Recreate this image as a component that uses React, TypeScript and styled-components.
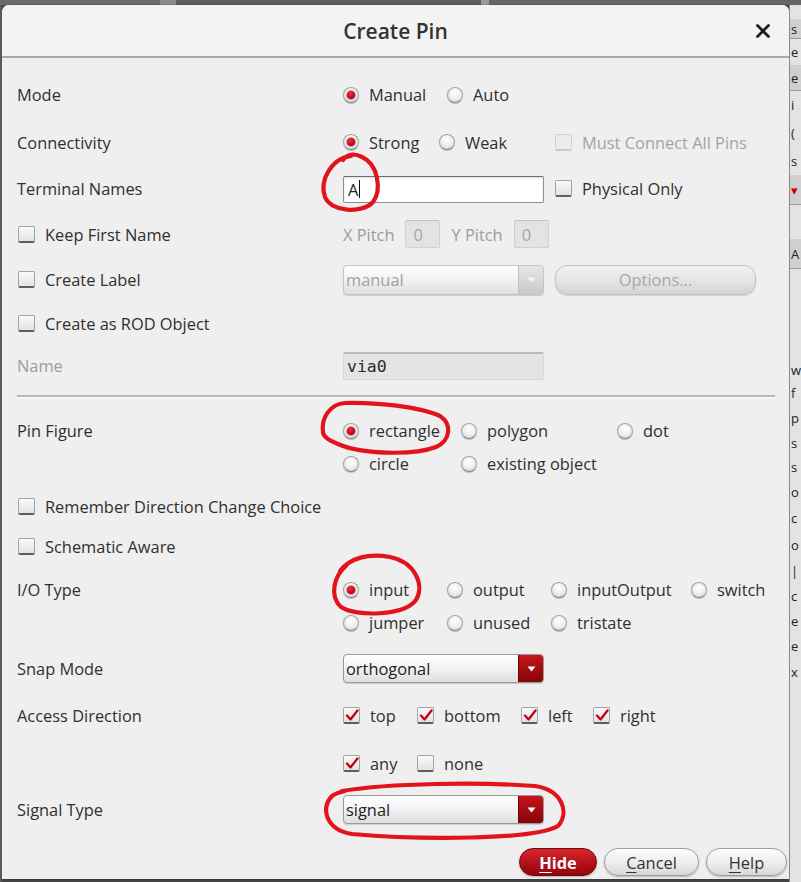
import React from "react";
import styled, { createGlobalStyle, css } from "styled-components";

const GlobalStyle = createGlobalStyle`
  html, body { margin: 0; padding: 0; background: #3f3f3f; }
  body { font-family: "Open Sans", "Noto Sans", sans-serif; overflow: hidden; }
  * { box-sizing: border-box; }
`;

const FS = "16.4px";

const Page = styled.div`
  position: relative;
  width: 801px;
  height: 882px;
  overflow: hidden;
  display: flex;
  flex-direction: column;
  background: #444;
`;

const TopStrip = styled.div`
  height: 5px;
  background: linear-gradient(90deg, #6b6b6b 0 20%, #8a8a8a 20% 22%, #5e5e5e 22% 60%, #9a9a9a 60% 61%, #666 61%);
`;

const Main = styled.div`
  flex: 1;
  display: flex;
  min-height: 0;
`;

const LeftEdge = styled.div`
  width: 2px;
  background: #5a5a5a;
`;

const Dialog = styled.div`
  width: 787px;
  height: 874px;
  background: #efefef;
  border-radius: 7px 7px 0 0;
  display: flex;
  flex-direction: column;
  box-shadow: 1px 0 0 #777, 2px 0 2px rgba(0, 0, 0, 0.4);
`;

const Header = styled.div`
  height: 53px;
  display: grid;
  grid-template-columns: 1fr auto 1fr;
  align-items: center;
  background: #f3f3f3;
  border-radius: 7px 7px 0 0;
  border-bottom: 2px solid #a9a9a9;
`;

const Title = styled.div`
  grid-column: 2;
  font-size: 21px;
  font-weight: 600;
  color: #333;
  padding-top: 1px;
`;

const CloseButton = styled.div`
  justify-self: end;
  margin-right: 19px;
  display: flex;
  align-items: center;
`;

const Body = styled.div`
  padding: 12px 14px 0 15px;
  display: flex;
  flex-direction: column;
`;

const Row = styled.div<{ $h: number }>`
  display: grid;
  grid-template-columns: 326px 1fr;
  align-items: center;
  height: ${(p) => p.$h}px;
  padding-top: 1px;
`;

const MultiRow = styled.div`
  display: grid;
  grid-template-columns: 326px 1fr;
  align-items: start;
  padding: 8px 0 6px;
`;

const Label = styled.div<{ $muted?: boolean; $lh?: number }>`
  font-size: ${FS};
  color: ${(p) => (p.$muted ? "#9d9d9d" : "#2f2f2f")};
  line-height: ${(p) => (p.$lh ? `${p.$lh}px` : "normal")};
  white-space: nowrap;
`;

const CheckRow = styled.label`
  display: flex;
  align-items: center;
  gap: 10px;
  margin-left: 1px;
  font-size: ${FS};
  color: #2f2f2f;
  white-space: nowrap;
`;

const ControlGrid = styled.div`
  display: grid;
  grid-template-columns: 201px auto;
  column-gap: 11px;
  align-items: center;
`;

const OptionGrid = styled.div<{ $cols: string; $rowH?: number }>`
  display: grid;
  grid-template-columns: ${(p) => p.$cols};
  grid-auto-rows: ${(p) => (p.$rowH ? `${p.$rowH}px` : "auto")};
  align-items: center;
`;

const Inline = styled.div<{ $gap: number }>`
  display: flex;
  align-items: center;
  gap: ${(p) => p.$gap}px;
`;

const Option = styled.span<{ $muted?: boolean }>`
  display: inline-flex;
  align-items: center;
  gap: 10px;
  font-size: ${FS};
  color: ${(p) => (p.$muted ? "#a3a3a3" : "#2f2f2f")};
  white-space: nowrap;
`;

const RadioCircle = styled.span<{ $on?: boolean }>`
  width: 16px;
  height: 16px;
  border-radius: 50%;
  flex: none;
  border: 1px solid #a2a2a2;
  border-bottom-color: #7e7e7e;
  background: radial-gradient(circle at 50% 35%, #ffffff 0%, #f1f1f1 45%, #cdcdcd 100%);
  box-shadow: 0 1px 1px rgba(0, 0, 0, 0.2);
  display: flex;
  align-items: center;
  justify-content: center;
  ${(p) =>
    p.$on &&
    css`
      &::after {
        content: "";
        width: 8px;
        height: 8px;
        border-radius: 50%;
        background: radial-gradient(circle at 40% 35%, #f0303a 0%, #c3001b 60%, #8a0010 100%);
        box-shadow: 0 0 0 1px rgba(120, 0, 0, 0.35);
      }
    `}
`;

const CheckBox = styled.span<{ $disabled?: boolean }>`
  width: 17px;
  height: 17px;
  flex: none;
  border: 1px solid ${(p) => (p.$disabled ? "#d0d0d0" : "#a3a3a3")};
  border-bottom: 2px solid ${(p) => (p.$disabled ? "#c8c8c8" : "#5f5f5f")};
  border-radius: 2px;
  background: ${(p) =>
    p.$disabled ? "#ececec" : "linear-gradient(#fafafa, #e2e2e2)"};
  display: flex;
  align-items: center;
  justify-content: center;
`;

const TextField = styled.div`
  width: 201px;
  height: 27px;
  margin-top: 1px;
  background: #fff;
  border: 1px solid #8f8f8f;
  border-top-color: #6e6e6e;
  border-radius: 2px;
  box-shadow: inset 0 1px 2px rgba(0, 0, 0, 0.15);
  display: flex;
  align-items: center;
  padding-left: 4px;
  font-size: ${FS};
  color: #222;
`;

const Caret = styled.span`
  width: 1px;
  height: 18px;
  background: #111;
  margin-left: 1px;
`;

const SmallField = styled.div`
  width: 35px;
  height: 28px;
  background: #e3e3e3;
  border: 1px solid #d0d0d0;
  border-top-color: #c2c2c2;
  border-radius: 2px;
  display: flex;
  align-items: center;
  padding-left: 7px;
  font-size: ${FS};
  color: #a6a6a6;
`;

const NameField = styled.div`
  width: 201px;
  height: 28px;
  background: #e4e4e4;
  border: 1px solid #d6d6d6;
  border-top: 2px solid #b9b9b9;
  border-radius: 2px;
  display: flex;
  align-items: center;
  padding-left: 3px;
  font-family: "DejaVu Sans Mono", "Liberation Mono", monospace;
  font-size: 16.5px;
  color: #2a2a2a;
`;

const Select = styled.div<{ $disabled?: boolean; $h: number }>`
  width: 201px;
  height: ${(p) => p.$h}px;
  display: flex;
  align-items: stretch;
  border: 1px solid ${(p) => (p.$disabled ? "#c4c4c4" : "#9a9a9a")};
  border-radius: 4px;
  background: linear-gradient(#ffffff, #f0f0f0 55%, #dedede);
  box-shadow: 0 1px 1px rgba(0, 0, 0, 0.15);
  overflow: hidden;
`;

const SelectText = styled.span<{ $disabled?: boolean }>`
  flex: 1;
  display: flex;
  align-items: center;
  padding-left: 2px;
  font-size: ${FS};
  color: ${(p) => (p.$disabled ? "#a2a2a2" : "#222")};
`;

const SelectArrow = styled.span<{ $disabled?: boolean }>`
  width: 25px;
  display: flex;
  align-items: center;
  justify-content: center;
  background: ${(p) =>
    p.$disabled
      ? "linear-gradient(#e6e6e6, #c9c9c9)"
      : "linear-gradient(#c8161d, #9e0a0f 60%, #8a0509)"};
  border-left: 1px solid ${(p) => (p.$disabled ? "#c0c0c0" : "#6e0407")};
`;

const OptionsButton = styled.div`
  width: 201px;
  height: 30px;
  border-radius: 12px;
  border: 1px solid #c2c2c2;
  background: linear-gradient(#f2f2f2, #e2e2e2 60%, #d3d3d3);
  box-shadow: 0 1px 1px rgba(0, 0, 0, 0.12);
  display: flex;
  align-items: center;
  justify-content: center;
  font-size: ${FS};
  color: #a8a8a8;
`;

const Separator = styled.div`
  height: 20px;
  display: flex;
  align-items: center;
  &::before {
    content: "";
    flex: 1;
    height: 2px;
    background: #b9b9b9;
    box-shadow: 0 1px 0 #fafafa;
  }
`;

const Footer = styled.div`
  display: flex;
  justify-content: flex-end;
  gap: 7px;
  padding: 17px 2px 0 0;
`;

const DialogButton = styled.div<{ $primary?: boolean; $w: number }>`
  width: ${(p) => p.$w}px;
  height: 28px;
  border-radius: 14px;
  display: flex;
  align-items: center;
  justify-content: center;
  font-size: ${FS};
  ${(p) =>
    p.$primary
      ? css`
          background: linear-gradient(#d9262d, #b2101a 55%, #94060c);
          border: 1px solid #6e0508;
          color: #fff;
          font-weight: 700;
        `
      : css`
          background: linear-gradient(#fdfdfd, #ececec 55%, #d6d6d6);
          border: 1px solid #9d9d9d;
          color: #333;
        `}
  box-shadow: 0 1px 2px rgba(0, 0, 0, 0.25);
  u {
    text-decoration-thickness: 1px;
    text-underline-offset: 3px;
  }
`;

const RightStrip = styled.div`
  flex: 1;
  background: #e3e3e3;
  border-left: 1px solid #8a8a8a;
  display: flex;
  flex-direction: column;
  overflow: hidden;
`;

const StripItem = styled.div<{ $h: number; $red?: boolean; $dark?: boolean }>`
  height: ${(p) => p.$h}px;
  font-size: 13px;
  line-height: ${(p) => p.$h}px;
  color: ${(p) => (p.$red ? "#c00" : "#222")};
  background: ${(p) => (p.$dark ? "#cfcfcf" : "transparent")};
  white-space: nowrap;
  padding-left: 1px;
  border-bottom: ${(p) => (p.$dark ? "1px solid #999" : "none")};
`;

const Annotations = styled.svg`
  position: absolute;
  left: 0;
  top: 0;
  pointer-events: none;
`;

const CheckMark = () => (
  <svg width="14" height="13" viewBox="0 0 14 13">
    <path d="M2 6.5 L5.5 10.5 L12.5 1.5" fill="none" stroke="#c4001c" strokeWidth="2.3" strokeLinecap="round" strokeLinejoin="round" />
  </svg>
);

const DownTriangle = ({ color }: { color: string }) => (
  <svg width="9" height="6" viewBox="0 0 9 6">
    <path d="M0.5 0.5 L8.5 0.5 L4.5 5.5 Z" fill={color} />
  </svg>
);

const Radio = ({ on, children }: { on?: boolean; children: React.ReactNode }) => (
  <Option>
    <RadioCircle $on={on} />
    {children}
  </Option>
);

const Check = ({ on, disabled, children }: { on?: boolean; disabled?: boolean; children: React.ReactNode }) => (
  <Option $muted={disabled}>
    <CheckBox $disabled={disabled}>{on && <CheckMark />}</CheckBox>
    {children}
  </Option>
);

const stripItems: { h: number; t: string; red?: boolean; dark?: boolean }[] = [
  { h: 14, t: "" },
  { h: 20, t: "s", dark: true },
  { h: 26, t: "e" },
  { h: 26, t: "e", dark: true },
  { h: 28, t: "i" },
  { h: 28, t: "(" },
  { h: 28, t: "s" },
  { h: 30, t: "▾", red: true, dark: true },
  { h: 34, t: "" },
  { h: 30, t: "A", dark: true },
  { h: 90, t: "" },
  { h: 22, t: "w" },
  { h: 24, t: "f" },
  { h: 26, t: "p" },
  { h: 24, t: "s" },
  { h: 24, t: "s" },
  { h: 26, t: "o" },
  { h: 26, t: "c" },
  { h: 28, t: "o" },
  { h: 24, t: "|" },
  { h: 26, t: "c" },
  { h: 25, t: "e" },
  { h: 25, t: "e" },
  { h: 26, t: "x" },
];

export default function App() {
  return (
    <>
      <GlobalStyle />
      <Page>
        <TopStrip />
        <Main>
          <LeftEdge />
          <Dialog>
            <Header>
              <Title>Create Pin</Title>
              <CloseButton>
                <svg width="14" height="14" viewBox="0 0 14 14">
                  <path d="M1.5 1.5 L12.5 12.5 M12.5 1.5 L1.5 12.5" stroke="#1e1e1e" strokeWidth="2.8" strokeLinecap="round" />
                </svg>
              </CloseButton>
            </Header>
            <Body>
              <Row $h={48}>
                <Label>Mode</Label>
                <OptionGrid $cols="104px auto">
                  <Radio on>Manual</Radio>
                  <Radio>Auto</Radio>
                </OptionGrid>
              </Row>
              <Row $h={47}>
                <Label>Connectivity</Label>
                <ControlGrid>
                  <OptionGrid $cols="96px auto">
                    <Radio on>Strong</Radio>
                    <Radio>Weak</Radio>
                  </OptionGrid>
                  <Check disabled>Must Connect All Pins</Check>
                </ControlGrid>
              </Row>
              <Row $h={46}>
                <Label>Terminal Names</Label>
                <ControlGrid>
                  <TextField>
                    A<Caret />
                  </TextField>
                  <Check>Physical Only</Check>
                </ControlGrid>
              </Row>
              <Row $h={45}>
                <CheckRow>
                  <CheckBox />
                  Keep First Name
                </CheckRow>
                <Inline $gap={11}>
                  <Label $muted>X Pitch</Label>
                  <SmallField>0</SmallField>
                  <Label $muted>Y Pitch</Label>
                  <SmallField>0</SmallField>
                </Inline>
              </Row>
              <Row $h={46}>
                <CheckRow>
                  <CheckBox />
                  Create Label
                </CheckRow>
                <ControlGrid>
                  <Select $disabled $h={30}>
                    <SelectText $disabled>manual</SelectText>
                    <SelectArrow $disabled>
                      <DownTriangle color="#f4f4f4" />
                    </SelectArrow>
                  </Select>
                  <OptionsButton>Options...</OptionsButton>
                </ControlGrid>
              </Row>
              <Row $h={42}>
                <CheckRow>
                  <CheckBox />
                  Create as ROD Object
                </CheckRow>
                <div />
              </Row>
              <Row $h={42}>
                <Label $muted>Name</Label>
                <NameField>via0</NameField>
              </Row>
              <Separator />
              <MultiRow>
                <Label $lh={33}>Pin Figure</Label>
                <OptionGrid $cols="118px 156px auto" $rowH={33}>
                  <Radio on>rectangle</Radio>
                  <Radio>polygon</Radio>
                  <Radio>dot</Radio>
                  <Radio>circle</Radio>
                  <Radio>existing object</Radio>
                </OptionGrid>
              </MultiRow>
              <Row $h={40}>
                <CheckRow>
                  <CheckBox />
                  Remember Direction Change Choice
                </CheckRow>
                <div />
              </Row>
              <Row $h={39}>
                <CheckRow>
                  <CheckBox />
                  Schematic Aware
                </CheckRow>
                <div />
              </Row>
              <MultiRow>
                <Label $lh={33}>I/O Type</Label>
                <OptionGrid $cols="104px 104px 140px auto" $rowH={33}>
                  <Radio on>input</Radio>
                  <Radio>output</Radio>
                  <Radio>inputOutput</Radio>
                  <Radio>switch</Radio>
                  <Radio>jumper</Radio>
                  <Radio>unused</Radio>
                  <Radio>tristate</Radio>
                </OptionGrid>
              </MultiRow>
              <Row $h={46}>
                <Label>Snap Mode</Label>
                <Select $h={29}>
                  <SelectText>orthogonal</SelectText>
                  <SelectArrow>
                    <DownTriangle color="#ffffff" />
                  </SelectArrow>
                </Select>
              </Row>
              <Row $h={48}>
                <Label>Access Direction</Label>
                <OptionGrid $cols="74px 104px 72px auto">
                  <Check on>top</Check>
                  <Check on>bottom</Check>
                  <Check on>left</Check>
                  <Check on>right</Check>
                </OptionGrid>
              </Row>
              <Row $h={48}>
                <div />
                <OptionGrid $cols="74px auto">
                  <Check on>any</Check>
                  <Check>none</Check>
                </OptionGrid>
              </Row>
              <Row $h={44}>
                <Label>Signal Type</Label>
                <Select $h={29}>
                  <SelectText>signal</SelectText>
                  <SelectArrow>
                    <DownTriangle color="#ffffff" />
                  </SelectArrow>
                </Select>
              </Row>
            </Body>
            <Footer>
              <DialogButton $primary $w={78}>
                <span>
                  <u>H</u>ide
                </span>
              </DialogButton>
              <DialogButton $w={95}>
                <span>
                  <u>C</u>ancel
                </span>
              </DialogButton>
              <DialogButton $w={81}>
                <span>
                  <u>H</u>elp
                </span>
              </DialogButton>
            </Footer>
          </Dialog>
          <RightStrip>
            {stripItems.map((it, i) => (
              <StripItem key={i} $h={it.h} $red={it.red} $dark={it.dark}>
                {it.t}
              </StripItem>
            ))}
          </RightStrip>
        </Main>
        <Annotations width="801" height="882" viewBox="0 0 801 882">
          <g fill="none" stroke="#e3131b" strokeWidth="4.2" strokeLinecap="round" strokeLinejoin="round">
            <path d="M351 156 C 332 158, 319 180, 325 197 C 331 212, 362 214, 373 202 C 382 190, 378 164, 362 157 C 354 153, 347 154, 343 160" />
            <path d="M323 432 C 321 418, 330 404, 345 403 C 372 402, 418 406, 440 416 C 452 424, 451 440, 436 447 C 412 456, 360 454, 338 444 C 328 440, 323 436, 323 432" />
            <path d="M346 566 C 334 576, 329 596, 341 607 C 356 617, 404 616, 416 600 C 425 585, 415 562, 390 557 C 368 553, 350 558, 340 571" />
            <path d="M342 791 C 390 783, 480 782, 535 786 C 562 790, 570 812, 558 826 C 535 840, 420 840, 352 834 C 326 830, 320 808, 332 796 C 336 793, 340 792, 345 791" />
          </g>
        </Annotations>
      </Page>
    </>
  );
}
